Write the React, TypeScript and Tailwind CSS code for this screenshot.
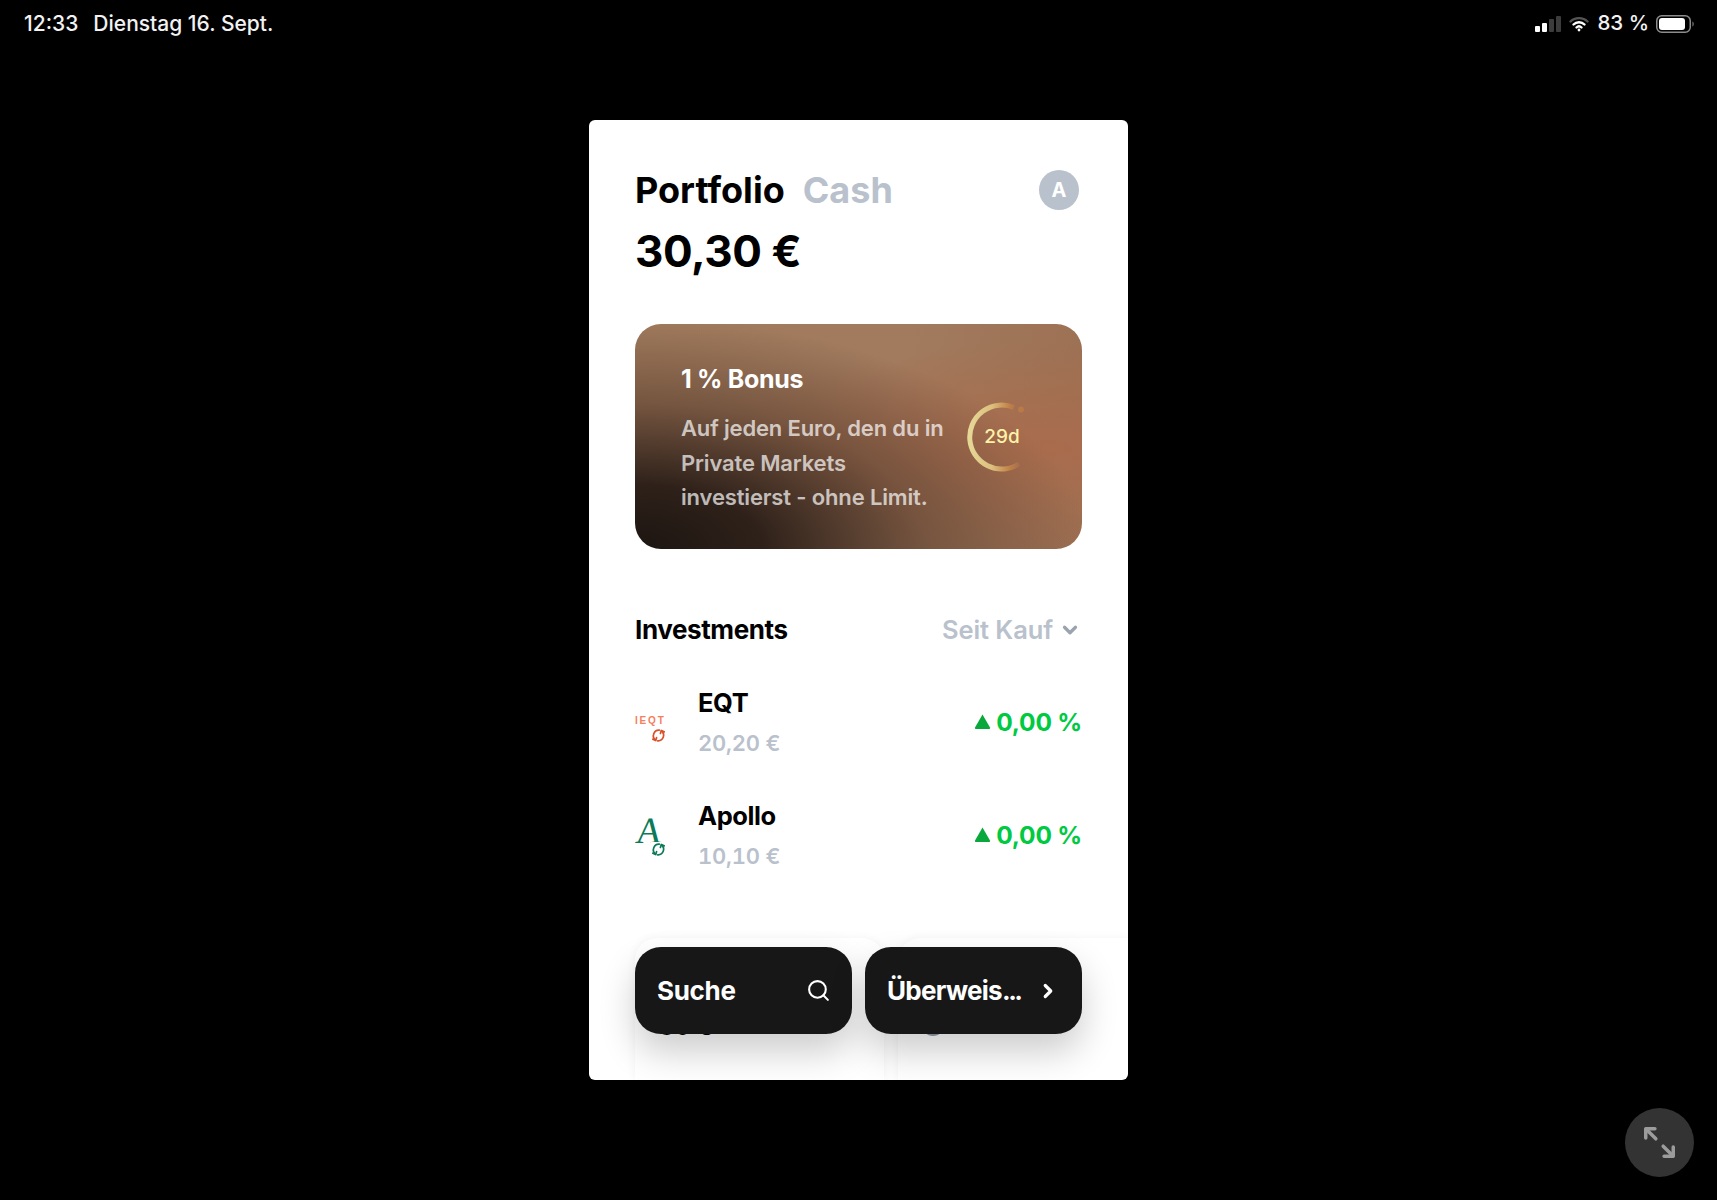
import React from "react";
import { Search, ChevronRight, ChevronDown } from "lucide-react";

function Swap({ color }: { color: string }) {
  return (
    <svg width="15" height="15" viewBox="0 0 15 15" fill="none" stroke={color} strokeWidth="1.7" strokeLinecap="round" strokeLinejoin="round">
      <path d="M8.300 2.200A5.500 5.500 0 0 0 4.500 12" />
      <path d="M6.700 12.800A5.500 5.500 0 0 0 10.500 3" />
      <path d="M1.800 11.200L4.700 12.600L5.600 9.600" />
      <path d="M13.200 3.800L10.300 2.400L9.400 5.400" />
    </svg>
  );
}

function EqtLogo() {
  return (
    <div className="relative h-[42px] w-[34px]">
      <svg width="34" height="18" viewBox="0 0 34 18" className="absolute left-0 top-[11px]">
        <text x="0" y="11" fontSize="10" fontWeight="700" fontFamily="'Liberation Sans', sans-serif" letterSpacing="1.8" fill="#f5805c">IEQT</text>
      </svg>
      <div className="absolute bottom-[1px] right-[3px]">
        <Swap color="#d9512a" />
      </div>
    </div>
  );
}

function ApolloLogo() {
  return (
    <div className="relative h-[42px] w-[34px]">
      <span className="absolute left-[1px] top-[-4px] -skew-x-6 font-['Liberation_Serif',serif] text-[37px] leading-[40px] text-[#0b7a58]">A</span>
      <div className="absolute bottom-[0px] right-[3px] bg-white">
        <Swap color="#0b7a58" />
      </div>
    </div>
  );
}

function Row({ name, value, logo }: { name: string; value: string; logo: React.ReactNode }) {
  return (
    <div className="flex h-[113px] items-center">
      <div className="w-[63px]">{logo}</div>
      <div className="flex flex-1 flex-col gap-[10px]">
        <div className="h-[30px] text-[25.500px] font-bold leading-[30px] tracking-[-0.4px] text-black">{name}</div>
        <div className="h-[30px] text-[22px] font-semibold tabular-nums leading-[30px] tracking-[-0.2px] text-[#b9c1cc]">{value}</div>
      </div>
      <div className="mb-[2px] flex items-center gap-[5px]">
        <svg width="17" height="15" viewBox="0 0 17 15" fill="#0aa83c">
          <path d="M8.500 0.500 L16 13.500 Q16.500 15 15 15 L2 15 Q0.500 15 1 13.500 Z" />
        </svg>
        <span className="text-[24.500px] font-bold leading-[36px] tracking-[-0.2px] text-[#00c942]">0,00 %</span>
      </div>
    </div>
  );
}

function Ring() {
  return (
    <div className="relative flex h-[70px] w-[70px] items-center justify-center">
      <svg width="70" height="70" viewBox="0 0 70 70" className="absolute inset-0" fill="none">
        <defs>
          <linearGradient id="ringGrad" x1="0" y1="0" x2="1" y2="0">
            <stop offset="0" stopColor="#e6d796" />
            <stop offset="0.45" stopColor="#dcc07e" />
            <stop offset="0.8" stopColor="#c08248" />
            <stop offset="1" stopColor="#a86e4e" />
          </linearGradient>
        </defs>
        <path d="M47 5.500 A32 32 0 1 0 52 62" stroke="url(#ringGrad)" strokeWidth="5" />
        <circle cx="54" cy="7.500" r="3" fill="#b87a48" />
      </svg>
      <span className="relative mt-[1px] text-[19px] font-medium text-[#fdf2a8]">29d</span>
    </div>
  );
}

export default function App() {
  return (
    <div className="relative flex h-[1200px] w-full flex-col items-center bg-black font-['Inter','Liberation_Sans',sans-serif]">
      <div className="flex h-[46px] w-full items-center justify-between pl-[24px] pr-[22px] pt-[1px] text-[21px] font-medium text-[#f2f2f2]">
        <div className="flex gap-[15px]">
          <span>12:33</span>
          <span>Dienstag 16. Sept.</span>
        </div>
        <div className="flex items-center gap-[8px]">
          <svg width="26" height="18" viewBox="0 0 26 18">
            <rect x="0" y="11" width="5" height="6" rx="1" fill="#fff" />
            <rect x="7" y="8" width="5" height="9" rx="1" fill="#fff" />
            <rect x="14" y="4" width="5" height="13" rx="1" fill="#3c3c3c" />
            <rect x="21" y="1" width="5" height="16" rx="1" fill="#3c3c3c" />
          </svg>
          <svg width="20" height="16" viewBox="0 0 20 16" fill="none" strokeLinecap="round">
            <path d="M1.500 5.500C6 1 14 1 18.500 5.500" stroke="#555" strokeWidth="2.400" />
            <path d="M4.500 8.500C7.500 5.500 12.500 5.500 15.500 8.500" stroke="#fff" strokeWidth="2.400" />
            <path d="M7.500 11.500C9 10 11 10 12.500 11.500" stroke="#fff" strokeWidth="2.400" />
            <circle cx="10" cy="14" r="1.400" fill="#fff" />
          </svg>
          <span className="text-[20.500px]">83 %</span>
          <svg width="39" height="18" viewBox="0 0 39 18" className="ml-[-1px]">
            <rect x="0.750" y="0.750" width="33.500" height="16.500" rx="5" fill="none" stroke="#8c8c8c" strokeWidth="1.500" />
            <rect x="3" y="3" width="26" height="12" rx="3" fill="#fff" />
            <path d="M36.500 6.500C38 7 38 11 36.500 11.500Z" fill="#8c8c8c" />
          </svg>
        </div>
      </div>

      <div className="relative mt-[74px] flex h-[960px] w-[539px] flex-col overflow-hidden rounded-[6px] bg-white pl-[46px] pr-[46px] pt-[47px]">
        <div className="flex h-[45px] items-center justify-between">
          <div className="flex items-center gap-[18px] pt-[1px] text-[36px] font-bold leading-[45px]">
            <span className="text-black">Portfolio</span>
            <span className="text-[#b9c1cc]">Cash</span>
          </div>
          <div className="mr-[3px] flex h-[40px] w-[40px] items-center justify-center rounded-full bg-[#b9c1cc] text-[20px] font-bold text-white">A</div>
        </div>
        <div className="mt-[11px] h-[56px] text-[44px] font-bold leading-[56px] tracking-[-0.4px] text-black">30,30 €</div>

        <div className="mt-[45px] flex h-[225px] items-center justify-between rounded-[26px] bg-[radial-gradient(ellipse_at_0%_100%,#1c1511_0%,rgba(40,28,22,0.95)_20%,rgba(90,62,46,0.6)_46%,rgba(120,85,62,0)_72%),radial-gradient(ellipse_at_92%_55%,#a96c4d_0%,rgba(169,108,77,0)_60%),linear-gradient(100deg,#a07a5c_0%,#a27b5e_55%,#9c6f52_100%)] pl-[46px] pr-[45px]">
          <div className="flex flex-col pt-[4px]">
            <div className="h-[34px] text-[25px] font-bold leading-[34px] tracking-[-0.3px] text-white">1 % Bonus</div>
            <div className="mt-[15px] text-[22px] font-semibold leading-[34.500px] tracking-[-0.150px] text-white/70">
              Auf jeden Euro, den du in
              <br />
              Private Markets
              <br />
              investierst - ohne Limit.
            </div>
          </div>
          <Ring />
        </div>

        <div className="mt-[63px] flex h-[36px] items-center justify-between">
          <span className="mb-[2px] text-[26px] font-bold tracking-[-0.400px] text-black">Investments</span>
          <div className="flex items-center gap-[6px] pr-[1px]">
            <span className="mt-[1px] text-[25.500px] font-semibold tracking-[-0.1px] text-[#b9c1cc]">Seit Kauf</span>
            <ChevronDown size={22} strokeWidth={3.500} className="text-[#9aa3ae]" />
          </div>
        </div>

        <div className="mt-[18px] flex flex-col">
          <Row name="EQT" value="20,20 €" logo={<EqtLogo />} />
          <Row name="Apollo" value="10,10 €" logo={<ApolloLogo />} />
        </div>

        <div className="mt-[46px] mr-[-46px] flex flex-1 gap-[14px]">
          <div className="w-[249px] rounded-t-[22px] pl-[24px] pt-[71px] text-[24px] font-bold leading-[36px] text-black shadow-[0_0_10px_rgba(0,0,0,0.05)]">30 €</div>
          <div className="flex-1 rounded-tl-[22px] pl-[24px] pt-[76px] shadow-[0_0_10px_rgba(0,0,0,0.05)]">
            <div className="h-[22px] w-[22px] rounded-full bg-[#8f98a3]" />
          </div>
        </div>

        <div className="absolute left-[46px] right-[46px] top-[827px] grid grid-cols-2 gap-[13px]">
          <div className="flex h-[87px] items-center justify-between rounded-[26px] bg-[#171717] pl-[22px] pr-[21px] shadow-[0_18px_36px_rgba(0,0,0,0.2)]">
            <span className="text-[26px] font-bold tracking-[-0.3px] text-white">Suche</span>
            <Search size={25} strokeWidth={2} className="text-white" />
          </div>
          <div className="flex h-[87px] items-center justify-between rounded-[26px] bg-[#171717] pl-[22px] pr-[23px] shadow-[0_18px_36px_rgba(0,0,0,0.2)]">
            <span className="text-[26px] font-bold tracking-[-0.7px] text-white">
              Überweis<span className="tracking-[-2.500px]">...</span>
            </span>
            <ChevronRight size={22} strokeWidth={3.500} className="text-white" />
          </div>
        </div>
      </div>

      <div className="absolute bottom-[23px] right-[23px] flex h-[69px] w-[69px] items-center justify-center rounded-full bg-[#333333]">
        <svg width="33" height="33" viewBox="0 0 36 36" fill="none" stroke="#9c9c9c" strokeWidth="3.800" strokeLinecap="round" strokeLinejoin="round">
          <path d="M3 13V3H13" />
          <path d="M3.500 3.500L14 14" />
          <path d="M33 23V33H23" />
          <path d="M22 22L32.500 32.500" />
        </svg>
      </div>
    </div>
  );
}
